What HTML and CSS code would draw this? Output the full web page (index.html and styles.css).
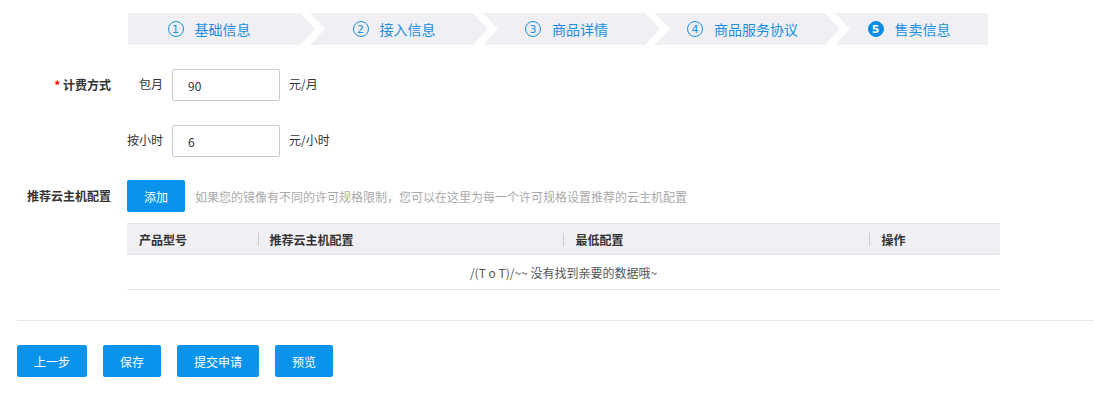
FILE: index.html
```html
<!DOCTYPE html>
<html lang="zh-CN">
<head>
    <meta charset="UTF-8">
    <title>售卖信息</title>
    <link rel="stylesheet" href="styles.css">
</head>
<body>
    <div class="page">
        <!-- step bar -->
        <div class="steps">
            <div class="step"><span class="num">1</span>基础信息</div>
            <div class="step"><span class="num">2</span>接入信息</div>
            <div class="step"><span class="num">3</span>商品详情</div>
            <div class="step"><span class="num">4</span>商品服务协议</div>
            <div class="step active"><span class="num">5</span>售卖信息</div>
        </div>

        <div class="form">
            <div class="form-row">
                <label class="form-label"><em>*</em> 计费方式</label>
                <div class="form-body">
                    <div class="price-line">
                        <span class="sub-label">包月</span>
                        <input class="input" type="text" value="90">
                        <span class="unit">元/月</span>
                    </div>
                    <div class="price-line">
                        <span class="sub-label">按小时</span>
                        <input class="input" type="text" value="6">
                        <span class="unit">元/小时</span>
                    </div>
                </div>
            </div>

            <div class="form-row">
                <label class="form-label">推荐云主机配置</label>
                <div class="form-body">
                    <div class="add-line">
                        <button class="btn">添加</button>
                        <span class="hint">如果您的镜像有不同的许可规格限制，您可以在这里为每一个许可规格设置推荐的云主机配置</span>
                    </div>
                    <table class="grid">
                        <thead>
                            <tr>
                                <th class="col-s">产品型号</th>
                                <th class="col-l">推荐云主机配置</th>
                                <th class="col-l">最低配置</th>
                                <th class="col-s">操作</th>
                            </tr>
                        </thead>
                        <tbody>
                            <tr>
                                <td class="empty" colspan="4">/(T o T)/~~ 没有找到亲要的数据哦~</td>
                            </tr>
                        </tbody>
                    </table>
                </div>
            </div>
        </div>

        <div class="footer">
            <button class="btn">上一步</button>
            <button class="btn">保存</button>
            <button class="btn">提交申请</button>
            <button class="btn">预览</button>
        </div>
    </div>
</body>
</html>
```

FILE: styles.css
```css
body {
    margin: 0;
    font-family: "Noto Sans CJK SC", "Microsoft YaHei", sans-serif;
    font-size: 12px;
    color: #333;
    background: #fff;
}
.page {
    padding: 13px 0 0 17px;
}

/* steps */
.steps {
    display: flex;
    width: 860px;
    height: 32px;
    margin-left: 111px;
}
.step {
    display: flex;
    align-items: center;
    justify-content: center;
    height: 32px;
    margin-left: -5px;
    padding: 0 25px 0 15px;
    box-sizing: border-box;
    background: #efeff4;
    color: #1a8fe3;
    font-size: 14px;
    clip-path: polygon(0 0, calc(100% - 15px) 0, 100% 50%, calc(100% - 15px) 100%, 0 100%, 15px 50%);
}
.step:nth-child(1) { width: 187px; margin-left: 0; padding: 0 25px 0 0; clip-path: polygon(0 0, calc(100% - 15px) 0, 100% 50%, calc(100% - 15px) 100%, 0 100%); }
.step:nth-child(2) { width: 178px; }
.step:nth-child(3) { width: 177px; }
.step:nth-child(4) { width: 185px; }
.step:nth-child(5) { width: 153px; padding: 0 20px 0 15px; clip-path: polygon(0 0, 100% 0, 100% 100%, 0 100%, 15px 50%); }
.num {
    display: inline-flex;
    align-items: center;
    justify-content: center;
    width: 16px;
    height: 16px;
    margin-right: 11px;
    border: 1px solid #1a8fe3;
    border-radius: 50%;
    box-sizing: border-box;
    font-family: "DejaVu Sans", sans-serif;
    font-size: 11px;
    line-height: 1;
}
.step.active .num {
    background: #0a8ee8;
    border-color: #0a8ee8;
    color: #fff;
    font-weight: bold;
}

/* form */
.form {
    margin-top: 24px;
}
.form-row {
    display: flex;
    margin-bottom: 23px;
}
.form-row:last-child {
    margin-bottom: 0;
}
.form-label {
    width: 94px;
    flex-shrink: 0;
    height: 32px;
    line-height: 32px;
    text-align: right;
    font-weight: bold;
    color: #333;
}
.form-label em {
    color: #f00;
    font-style: normal;
}
.form-body {
    margin-left: 16px;
}
.price-line {
    display: flex;
    align-items: center;
    height: 32px;
    margin-bottom: 24px;
}
.price-line:last-child {
    margin-bottom: 0;
}
.sub-label {
    width: 36px;
    flex-shrink: 0;
    white-space: nowrap;
    text-align: right;
    margin-right: 9px;
    margin-top: -4px;
}
.input {
    width: 108px;
    height: 32px;
    box-sizing: border-box;
    border: 1px solid #ccc;
    border-radius: 2px;
    padding: 0 15px;
    font-family: inherit;
    font-size: 12px;
    color: #333;
    outline: none;
}
.unit {
    margin-left: 9px;
    margin-top: -4px;
}

.btn {
    height: 32px;
    padding: 0 17px;
    border: none;
    border-radius: 2px;
    background: #0a93ea;
    color: #fff;
    font-family: inherit;
    font-size: 12px;
    cursor: pointer;
}
.add-line {
    display: flex;
    align-items: center;
}
.hint {
    margin-left: 10px;
    color: #aaa;
}

/* table */
.grid {
    width: 873px;
    margin-top: 11px;
    border-collapse: collapse;
}
.grid th {
    position: relative;
    height: 30px;
    padding: 0 0 0 12px;
    background: #efeff4;
    border-top: 1px solid #e4e4e8;
    border-bottom: 1px solid #e4e4e8;
    text-align: left;
    font-weight: bold;
    color: #333;
}
.grid th + th::before {
    content: "";
    position: absolute;
    left: 0;
    top: 9px;
    width: 1px;
    height: 13px;
    background: #ccc;
}
.col-s { width: 119px; }
.col-l { width: 295px; }
.empty {
    height: 32px;
    text-align: center;
    border-bottom: 1px solid #e5e5e5;
    color: #555;
}

/* footer */
.footer {
    display: flex;
    gap: 16px;
    margin-top: 30px;
    padding-top: 24px;
    border-top: 1px solid #e5e5e5;
}
```
